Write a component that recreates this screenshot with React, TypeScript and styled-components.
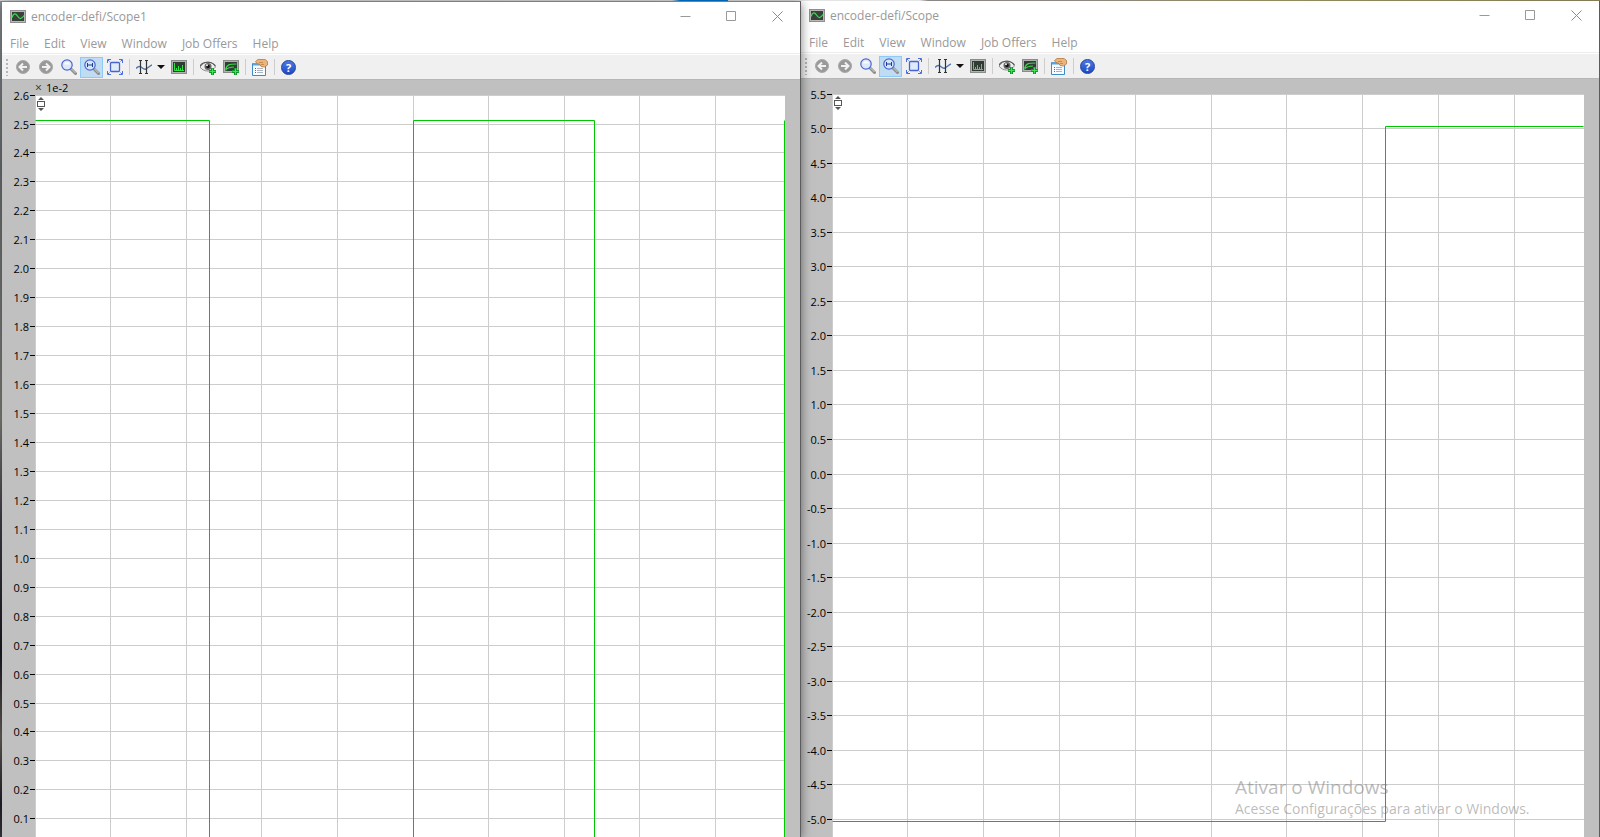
import React, { useLayoutEffect, useRef, useState } from "react";
import styled, { createGlobalStyle, css } from "styled-components";

const GlobalStyle = createGlobalStyle`
  * { box-sizing: border-box; }
  body { margin: 0; font-family: "Open Sans", "Noto Sans", sans-serif; font-size: 12px; color: #000; }
  button { font: inherit; color: inherit; }
`;

const Desktop = styled.main`
  position: relative;
  display: flex;
  height: 100vh;
  overflow: hidden;
  padding: 1px 0 0 2px;
  background:
    linear-gradient(90deg, #d8d9dc 0%, #e4e4e4 42%, #0078d7 42.5%, #0078d7 45.5%, #e4e4e4 45.5%, #e4e4e4 57.5%, #8b8785 58%, #8b8785 66%, #958a5c 80%, #857a55 100%) top / 100% 1px no-repeat,
    linear-gradient(180deg, #8e9396 0%, #6f7375 20%, #83857f 50%, #45424a 62%, #1c1b22 78%, #6b6460 88%, #23222c 96%, #3c3a42 100%);
`;

const WindowFrame = styled.section<{ $front?: boolean }>`
  flex: 1 1 0;
  min-width: 0;
  display: flex;
  flex-direction: column;
  background: #fff;
  border-right: 1px solid #5c5c5c;
  ${(p) =>
    p.$front &&
    css`
      position: relative;
      z-index: 1;
      border-top: 1px solid #7f7f7f;
      box-shadow: 0 2px 10px rgba(0, 0, 0, 0.5);
    `}
`;

const TitleBar = styled.header`
  display: flex;
  align-items: center;
  height: 28px;
  padding-left: 8px;
  gap: 5px;
  color: #999;
`;

const Title = styled.h1`
  flex: 1;
  margin: 0;
  padding-top: 1px;
  font-size: 12px;
  font-weight: 400;
  line-height: 28px;
`;

const WindowButtons = styled.div`
  display: flex;
`;

const WindowButton = styled.button`
  display: grid;
  place-items: center;
  width: 46px;
  height: 28px;
  padding: 0;
  border: 0;
  background: none;
`;

const MenuBar = styled.nav`
  display: flex;
  gap: 15px;
  height: 24px;
  padding: 4px 8px 0;
  border-bottom: 1px solid #ececec;
  color: #999;
`;

const MenuButton = styled.button`
  padding: 0;
  border: 0;
  background: none;
  line-height: 18px;
  white-space: nowrap;
`;

const Toolbar = styled.div`
  display: flex;
  align-items: center;
  height: 24px;
  margin-top: 1px;
  background: #f0f0f0;
`;

const Grip = styled.span`
  width: 9px;
  height: 18px;
  background: radial-gradient(circle at 5px 2px, #b4b4b4 1px, transparent 1px) 0 0 / 9px 4px;
`;

const ToolButton = styled.button<{ $active?: boolean; $narrow?: boolean }>`
  display: grid;
  place-items: center;
  width: ${(p) => (p.$narrow ? 12 : 23)}px;
  height: 21px;
  padding: 0;
  border: 1px solid ${(p) => (p.$active ? "#90c8f6" : "transparent")};
  background: ${(p) => (p.$active ? "#c0dcf3" : "none")};
`;

const Separator = styled.span`
  width: 6px;
  height: 16px;
  background: linear-gradient(#cdcdcd, #cdcdcd) 3px 0 / 1px 100% no-repeat;
`;

const PlotArea = styled.div`
  flex: 1;
  min-height: 0;
  overflow: hidden;
  background: #c0c0c0;
  border-top: 1px solid #b6b6b6;
`;

const Chart = styled.svg`
  display: block;
  width: 100%;
  height: 100%;
`;

const Watermark = styled.aside`
  position: absolute;
  z-index: 2;
  right: 65px;
  bottom: 18px;
  width: 300px;
  color: rgba(120, 120, 120, 0.5);
  white-space: nowrap;
  pointer-events: none;
`;

const WatermarkTitle = styled.p`
  margin: 0;
  font-size: 19px;
  line-height: 24px;
`;

const WatermarkText = styled.p`
  margin: 0;
  font-size: 14px;
  line-height: 20px;
`;

function ScopeIcon() {
  return (
    <svg width="16" height="13" viewBox="0 0 16 13" aria-hidden="true">
      <rect x=".5" y=".5" width="15" height="12" fill="#b9b9b9" stroke="#8f8f8f" />
      <rect x="2" y="2" width="12" height="9" fill="#3a403c" />
      <path d="M2 7.5C3.5 3 5.5 3 7.5 6S11 10 14 5.5" fill="none" stroke="#35e04a" strokeWidth="1.3" />
    </svg>
  );
}

function ArrowIcon({ forward }: { forward?: boolean }) {
  return (
    <svg width="16" height="16" viewBox="0 0 16 16" aria-hidden="true">
      <circle cx="8" cy="8" r="6.5" fill="#999" stroke="#a9a9a9" />
      <path
        d={forward ? "M4 8h7M8 4.5 11.5 8 8 11.5" : "M12 8H5M8 4.5 4.5 8 8 11.5"}
        fill="none"
        stroke="#f2f2f2"
        strokeWidth="2"
      />
    </svg>
  );
}

function MagnifierIcon({ horizontal }: { horizontal?: boolean }) {
  return (
    <svg width="16" height="16" viewBox="0 0 16 16" aria-hidden="true">
      <path d="m9.5 9.5 5 5" stroke="#8d8d8d" strokeWidth="3" strokeLinecap="round" />
      <path d="m10 9.5 4.5 4.5" stroke="#d2d2d2" strokeWidth="1" />
      <circle cx="6" cy="6" r="5.2" fill={horizontal ? "#d5e6fa" : "#dde9fb"} stroke="#4a66d2" strokeWidth="1.2" />
      {horizontal ? (
        <path d="M3.5 4v4M8.5 4v4M3.5 6h5" stroke="#1f3a8f" fill="none" />
      ) : (
        <path d="M3 5.5c0-1.5 1.5-2.5 3-2.5s3 1 3 2.5z" fill="#fff" opacity=".8" />
      )}
    </svg>
  );
}

function FitIcon() {
  return (
    <svg width="16" height="16" viewBox="0 0 16 16" aria-hidden="true">
      <rect x="3.5" y="3.5" width="9" height="9" rx="1" fill="#dfeafb" stroke="#4863cf" strokeWidth="1.3" />
      <path
        d="M.5 4V.5H4M12 .5h3.500V4M15.500 12v3.500H12M4 15.500H.500V12M1 1l1.500 1.500M15 1l-1.500 1.500M15 15l-1.500-1.500M1 15l1.500-1.500"
        fill="none"
        stroke="#4a6ee6"
      />
    </svg>
  );
}

function CursorsIcon() {
  return (
    <svg width="16" height="16" viewBox="0 0 16 16" aria-hidden="true">
      <path d="M0 9.5C2 7 3.5 7 5 8s3 3 5 2 3.5-3 6-4" fill="none" stroke="#4a76ac" strokeWidth="1.4" />
      <path d="M4.5 1v14M10.500 1v14M3 1.500h3M3 14.500h3M9 1.500h3M9 14.500h3" stroke="#333" strokeWidth="1.2" />
    </svg>
  );
}

function CaretIcon() {
  return (
    <svg width="8" height="4" viewBox="0 0 8 4" aria-hidden="true">
      <path d="M0 0h8L4 4z" fill="#111" />
    </svg>
  );
}

function SpectrumIcon() {
  return (
    <svg width="16" height="14" viewBox="0 0 16 14" aria-hidden="true">
      <rect x=".5" y=".5" width="15" height="13" fill="#b2b2b2" stroke="#8b8b8b" />
      <rect x="2" y="2" width="12" height="10" fill="#2f3c32" />
      <path d="M3.5 3v7.5H13M5.5 10V8M7.5 10V6M9.5 10V8M11.5 10V5" stroke="#2ee544" fill="none" />
    </svg>
  );
}

function PlusBadge() {
  return (
    <>
      <path d="M12.5 9v7M9 12.5h7" stroke="#0f9a2a" strokeWidth="3" fill="none" />
      <path d="M12.5 9.500v6M9.500 12.500h6" stroke="#44e05c" fill="none" />
    </>
  );
}

function EyeIcon() {
  return (
    <svg width="16" height="16" viewBox="0 0 16 16" aria-hidden="true">
      <path d="M0 8c2-3 5-5 8-5s6 2 7.500 5c-2 2.500-4.500 4-7.500 4S2 11 0 8z" fill="#eee" stroke="#8a8a8a" />
      <path d="M0 7c3-5 12-5 15.500 0" fill="none" stroke="#555" strokeWidth="1.2" />
      <circle cx="8" cy="7.500" r="3.500" fill="#666" />
      <circle cx="8" cy="7.500" r="1.800" fill="#111" />
      <circle cx="7" cy="6.300" r="1" fill="#eee" />
      <PlusBadge />
    </svg>
  );
}

function AddTraceIcon() {
  return (
    <svg width="16" height="16" viewBox="0 0 16 16" aria-hidden="true">
      <rect x=".5" y="1.5" width="15" height="12" fill="#b2b2b2" stroke="#8b8b8b" />
      <rect x="2" y="3" width="12" height="9" fill="#333c35" />
      <path d="M2.500 10.500C4 5.500 6 5 13.500 5M2.500 11.500C4.500 8.500 7 8 11 8" fill="none" stroke="#35dd4a" strokeWidth="1.2" />
      <PlusBadge />
    </svg>
  );
}

function PropertiesIcon() {
  return (
    <svg width="16" height="17" viewBox="0 0 16 17" aria-hidden="true">
      <path d="M.5 4.500h13v12H.5z" fill="#f8fbff" stroke="#3d8cc9" />
      <path d="M1 4h10v2.500H1z" fill="#5aa6dc" />
      <path d="M3 9.500h1M3 11.500h1M3 13.500h1" stroke="#3d6ea5" />
      <path d="M5 9.500h6M5 11.500h6M5 13.500h6" stroke="#a9b4c0" />
      <path d="M3.500 2.500 6 .5h7l2.500 2V6l-3 2-3.500-.5-1-2-3-1z" fill="#eab67e" stroke="#b9783c" strokeWidth=".8" />
      <path d="M7 3.500h4M9 5.500h3" stroke="#b9783c" strokeWidth=".7" />
    </svg>
  );
}

const QuestionMark = styled.span`
  display: grid;
  place-items: center;
  width: 15px;
  height: 15px;
  border-radius: 50%;
  border: 1px solid #1d3f9f;
  background: linear-gradient(#4d79e6, #1f49c4);
  color: #fff;
  font-size: 11px;
  font-weight: 700;
  line-height: 13px;
`;

interface Trace {
  points: [number, number][];
}

interface ScopeProps {
  title: string;
  front?: boolean;
  gutter: number;
  top: number;
  bottom: number;
  step: number;
  rowHeight: number;
  rowOffset: number;
  exponent?: string;
  traces: Trace[];
}

const TIME_DIVISIONS = 9.92;
const PLOT_TOP = 15;
const RIGHT_MARGIN = 15;

function ScopeChart(props: ScopeProps) {
  const ref = useRef<HTMLDivElement>(null);
  const [width, setWidth] = useState(798);

  useLayoutEffect(() => {
    const host = ref.current;
    if (!host) return;
    const measure = () => setWidth(host.clientWidth);
    measure();
    const observer = new ResizeObserver(measure);
    observer.observe(host);
    return () => observer.disconnect();
  }, []);

  const { gutter, top, bottom, step, rowHeight, rowOffset } = props;
  const plotWidth = width - gutter - RIGHT_MARGIN;
  const rows = Math.round((top - bottom) / step);
  const x = (t: number) => gutter + Math.floor((t * plotWidth) / TIME_DIVISIONS + 0.1) + 0.5;
  const y = (v: number) => PLOT_TOP + Math.floor(rowOffset + ((top - v) / step) * rowHeight + 0.01) + 0.5;

  return (
    <PlotArea ref={ref}>
      <Chart role="img" aria-label={`${props.title} signal over time`}>
        <rect x={gutter} y={PLOT_TOP} width={plotWidth} height="100%" fill="#fff" />
        <g stroke="#cdcdcd">
          {Array.from({ length: 10 }, (_, i) => (
            <line key={`c${i}`} x1={x(i)} x2={x(i)} y1={PLOT_TOP} y2="100%" />
          ))}
          {Array.from({ length: rows + 1 }, (_, i) => (
            <line key={`r${i}`} x1={gutter} x2={gutter + plotWidth} y1={y(top - i * step)} y2={y(top - i * step)} />
          ))}
        </g>
        {Array.from({ length: rows + 1 }, (_, i) => {
          const value = top - i * step;
          const py = y(value);
          return (
            <g key={i}>
              <line x1={gutter - 5} x2={gutter} y1={py} y2={py} stroke="#000" />
              <text x={gutter - 6} y={py + 4.5} fontSize="11" textAnchor="end">
                {(Math.abs(value) < 0.001 ? 0 : value).toFixed(1)}
              </text>
            </g>
          );
        })}
        {props.exponent && (
          <text x={gutter} y="12" fontSize="11">
            <tspan fill="#333" fontSize="12">×</tspan>
            <tspan x={gutter + 11}>{props.exponent}</tspan>
          </text>
        )}
        <g transform={`translate(${gutter} ${PLOT_TOP + 2})`}>
          <path d="M6 0 9 3H3zM6 14 9 11H3z" fill="#555" />
          <rect x="2.5" y="4.5" width="7" height="5" fill="#fff" stroke="#555" />
        </g>
        {props.traces.map((trace, i) => (
          <polyline
            key={i}
            points={trace.points.map(([t, v]) => `${Math.min(x(t), gutter + plotWidth - 0.5)},${y(v)}`).join(" ")}
            fill="none"
            stroke="#00c800"
          />
        ))}
      </Chart>
    </PlotArea>
  );
}

const menus = ["File", "Edit", "View", "Window", "Job Offers", "Help"];

function ScopeWindow(props: ScopeProps) {
  return (
    <WindowFrame $front={props.front}>
      <TitleBar>
        <ScopeIcon />
        <Title>{props.title}</Title>
        <WindowButtons>
          <WindowButton aria-label="Minimize">
            <svg width="11" height="11" viewBox="0 0 11 11"><path d="M.5 5.5h10" stroke="#999" /></svg>
          </WindowButton>
          <WindowButton aria-label="Maximize">
            <svg width="11" height="11" viewBox="0 0 11 11"><path d="M.5.5h9v9h-9z" fill="none" stroke="#999" /></svg>
          </WindowButton>
          <WindowButton aria-label="Close">
            <svg width="11" height="11" viewBox="0 0 11 11"><path d="m.5.5 10 10M10.5.5l-10 10" stroke="#8c8c8c" /></svg>
          </WindowButton>
        </WindowButtons>
      </TitleBar>
      <MenuBar>
        {menus.map((m) => (
          <MenuButton key={m}>{m}</MenuButton>
        ))}
      </MenuBar>
      <Toolbar role="toolbar">
        <Grip />
        <ToolButton aria-label="Previous view"><ArrowIcon /></ToolButton>
        <ToolButton aria-label="Next view"><ArrowIcon forward /></ToolButton>
        <ToolButton aria-label="Free zoom"><MagnifierIcon /></ToolButton>
        <ToolButton aria-label="Constrained zoom" $active><MagnifierIcon horizontal /></ToolButton>
        <ToolButton aria-label="Zoom to fit"><FitIcon /></ToolButton>
        <Separator />
        <ToolButton aria-label="Show cursors"><CursorsIcon /></ToolButton>
        <ToolButton aria-label="Cursor options" $narrow><CaretIcon /></ToolButton>
        <ToolButton aria-label="Fourier analysis"><SpectrumIcon /></ToolButton>
        <Separator />
        <ToolButton aria-label="Save view"><EyeIcon /></ToolButton>
        <ToolButton aria-label="Hold trace"><AddTraceIcon /></ToolButton>
        <Separator />
        <ToolButton aria-label="Scope parameters"><PropertiesIcon /></ToolButton>
        <Separator />
        <ToolButton aria-label="Help"><QuestionMark>?</QuestionMark></ToolButton>
      </Toolbar>
      <ScopeChart {...props} />
    </WindowFrame>
  );
}

const scope1Traces: Trace[] = [
  { points: [[0, 2.513], [2.302, 2.513], [2.302, 0], [5, 0], [5, 2.513], [7.393, 2.513], [7.393, 0], [9.92, 0], [9.92, 2.513]] },
];

const scopeTraces: Trace[] = [
  { points: [[0, -5.03], [7.295, -5.03], [7.295, 5.03], [9.92, 5.03]] },
];

export default function App() {
  return (
    <>
      <GlobalStyle />
      <Desktop>
        <ScopeWindow
          title="encoder-defi/Scope1"
          front
          gutter={33}
          top={2.6}
          bottom={0.1}
          step={0.1}
          rowHeight={28.95}
          rowOffset={0.05}
          exponent="1e-2"
          traces={scope1Traces}
        />
        <ScopeWindow
          title="encoder-defi/Scope"
          gutter={31}
          top={5.5}
          bottom={-5}
          step={0.5}
          rowHeight={34.53}
          rowOffset={0.2}
          traces={scopeTraces}
        />
        <Watermark>
          <WatermarkTitle>Ativar o Windows</WatermarkTitle>
          <WatermarkText>Acesse Configurações para ativar o Windows.</WatermarkText>
        </Watermark>
      </Desktop>
    </>
  );
}
